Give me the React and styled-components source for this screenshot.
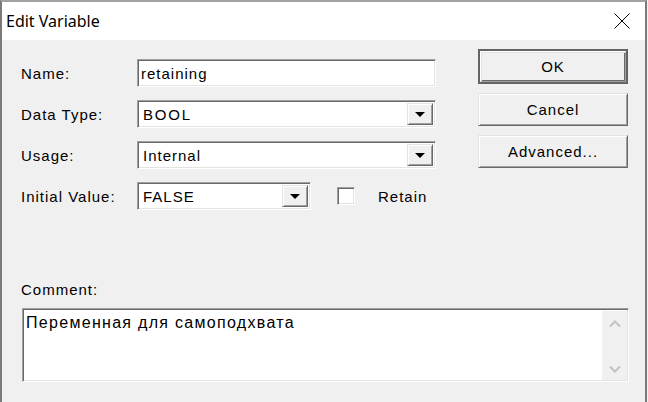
import React from "react";
import styled, { createGlobalStyle, css } from "styled-components";

const GlobalStyle = createGlobalStyle`
  html, body {
    margin: 0;
    padding: 0;
    background: #f0f0f0;
    overflow: hidden;
  }
`;

const uiFont = css`
  font-family: "Liberation Sans", Arial, sans-serif;
  font-size: 15px;
  letter-spacing: 1px;
  color: #000;
`;

const sunken = css`
  box-sizing: border-box;
  border: 1px solid;
  border-color: #a0a0a0 #ffffff #ffffff #a0a0a0;
  box-shadow: inset 1px 1px 0 #696969, inset -1px -1px 0 #e3e3e3;
`;

const raised = css`
  box-sizing: border-box;
  border: 1px solid;
  border-color: #e3e3e3 #696969 #696969 #e3e3e3;
  box-shadow: inset 1px 1px 0 #ffffff, inset -1px -1px 0 #a0a0a0;
  background: #f0f0f0;
`;

const Window = styled.div`
  width: 647px;
  height: 402px;
  box-sizing: border-box;
  border-top: 2px solid #a2a2a2;
  border-left: 2px solid #7a7a7a;
  border-right: 2px solid #7a7a7a;
  display: flex;
  flex-direction: column;
  background: #f0f0f0;
`;

const TitleBar = styled.div`
  height: 38px;
  background: #fff;
  display: flex;
  align-items: center;
  justify-content: space-between;
  padding-left: 4px;
`;

const Title = styled.div`
  font-family: "Noto Sans", "Open Sans", sans-serif;
  font-size: 16px;
  color: #000;
  margin-top: -1px;
`;

const CloseButton = styled.div`
  width: 46px;
  height: 38px;
  display: flex;
  align-items: center;
  justify-content: center;
`;

const Client = styled.div`
  flex: 1;
  padding: 9px 0 0 18px;
  display: flex;
  flex-direction: column;
`;

const Top = styled.div`
  display: flex;
  align-items: flex-start;
`;

const Form = styled.div`
  margin-top: 10px;
  display: grid;
  grid-template-columns: 117px 299px;
  grid-auto-rows: 28px;
  row-gap: 13px;
  align-items: center;
`;

const Label = styled.div`
  ${uiFont};
  padding-left: 1px;
`;

const TextField = styled.div`
  ${sunken};
  ${uiFont};
  height: 28px;
  background: #fff;
  padding: 0 3px;
  display: flex;
  align-items: center;
`;

const Combo = styled.div`
  ${sunken};
  height: 28px;
  width: ${(p) => p.$width || 299}px;
  background: #fff;
  padding: 2px;
  display: flex;
  align-items: stretch;
`;

const ComboText = styled.div`
  ${uiFont};
  flex: 1;
  display: flex;
  align-items: center;
  padding-left: 3px;
  letter-spacing: ${(p) => (p.$wide ? "1.8px" : "1px")};
`;

const DropButton = styled.div`
  ${raised};
  width: 26px;
  display: flex;
  align-items: center;
  justify-content: center;
`;

const Arrow = styled.div`
  width: 0;
  height: 0;
  border-left: 5px solid transparent;
  border-right: 5px solid transparent;
  border-top: 5px solid #000;
  margin-top: 1px;
`;

const InitialRow = styled.div`
  display: flex;
  align-items: center;
`;

const CheckBox = styled.div`
  ${sunken};
  width: 18px;
  height: 18px;
  background: #fff;
  margin-left: 26px;
`;

const CheckLabel = styled.div`
  ${uiFont};
  margin-left: 23px;
`;

const Buttons = styled.div`
  margin-left: 42px;
  width: 150px;
  display: flex;
  flex-direction: column;
  gap: 9px;
`;

const Button = styled.div`
  ${raised};
  ${uiFont};
  height: 33px;
  display: flex;
  align-items: center;
  justify-content: center;
  ${(p) =>
    p.$default &&
    css`
      height: 35px;
      border: 2px solid #646464;
      box-shadow: inset 1px 1px 0 #ffffff, inset -1px -1px 0 #a0a0a0,
        inset 2px 2px 0 #e3e3e3, inset -2px -2px 0 #696969;
    `}
`;

const CommentLabel = styled.div`
  ${uiFont};
  margin-top: 71px;
  padding-left: 1px;
  height: 18px;
`;

const CommentBox = styled.div`
  ${sunken};
  margin-top: 9px;
  margin-left: 2px;
  width: 607px;
  height: 74px;
  background: #fff;
  display: flex;
  padding: 2px 1px 1px 2px;
`;

const CommentText = styled.div`
  ${uiFont};
  font-size: 16px;
  letter-spacing: 1.3px;
  flex: 1;
  padding: 3px 0 0 1px;
`;

const ScrollBar = styled.div`
  width: 25px;
  background: #f0f0f0;
  display: flex;
  flex-direction: column;
  justify-content: space-between;
  align-items: center;
  padding: 9px 0 7px;
`;

const Chevron = ({ down }) => (
  <svg width="12" height="8" viewBox="0 0 12 8">
    <path
      d={down ? "M1 1.5 L6 6.5 L11 1.5" : "M1 6.5 L6 1.5 L11 6.5"}
      fill="none"
      stroke="#c2c2c2"
      strokeWidth="2"
    />
  </svg>
);

function Combobox({ value, width, wide }) {
  return (
    <Combo $width={width}>
      <ComboText $wide={wide}>{value}</ComboText>
      <DropButton>
        <Arrow />
      </DropButton>
    </Combo>
  );
}

export default function App() {
  return (
    <>
      <GlobalStyle />
      <Window>
        <TitleBar>
          <Title>Edit Variable</Title>
          <CloseButton>
            <svg width="16" height="16" viewBox="0 0 16 16">
              <path d="M0.5 0.5 L15.5 15.5 M15.5 0.5 L0.5 15.5" stroke="#000" strokeWidth="1" />
            </svg>
          </CloseButton>
        </TitleBar>
        <Client>
          <Top>
            <Form>
              <Label>Name:</Label>
              <TextField>retaining</TextField>
              <Label>Data Type:</Label>
              <Combobox value="BOOL" wide />
              <Label>Usage:</Label>
              <Combobox value="Internal" />
              <Label>Initial Value:</Label>
              <InitialRow>
                <Combobox value="FALSE" width={174} />
                <CheckBox />
                <CheckLabel>Retain</CheckLabel>
              </InitialRow>
            </Form>
            <Buttons>
              <Button $default>OK</Button>
              <Button>Cancel</Button>
              <Button>Advanced...</Button>
            </Buttons>
          </Top>
          <CommentLabel>Comment:</CommentLabel>
          <CommentBox>
            <CommentText>Переменная для самоподхвата</CommentText>
            <ScrollBar>
              <Chevron />
              <Chevron down />
            </ScrollBar>
          </CommentBox>
        </Client>
      </Window>
    </>
  );
}
